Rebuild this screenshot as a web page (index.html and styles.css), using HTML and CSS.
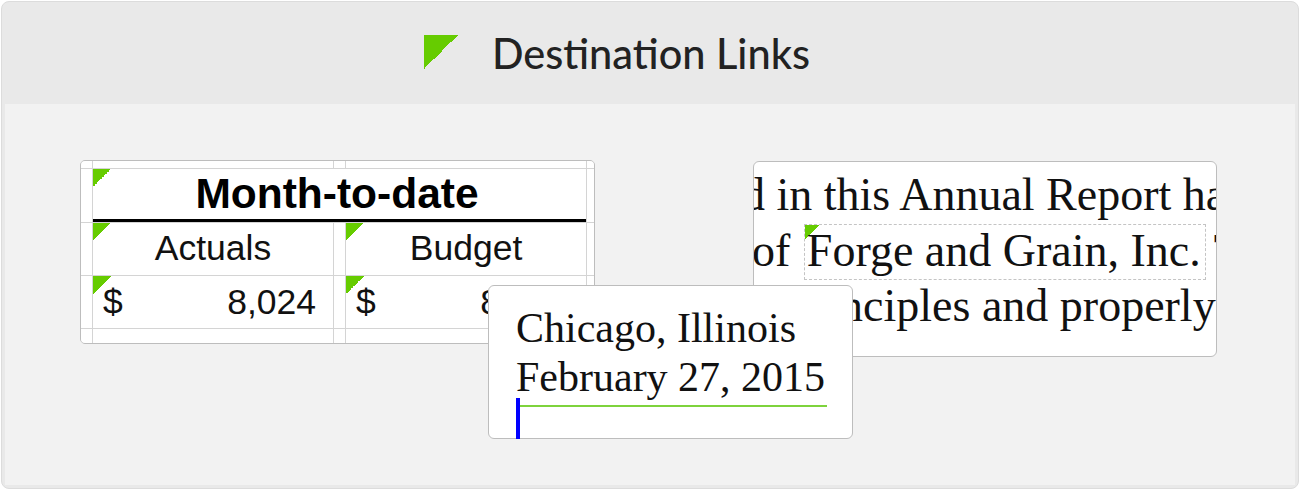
FILE: index.html
```html
<!DOCTYPE html>
<html lang="en">
  <head>
    <meta charset="UTF-8" />
    <meta name="viewport" content="width=device-width, initial-scale=1.0" />
    <title>Destination Links</title>
    <link rel="stylesheet" href="styles.css">
  </head>
  <body>
    <div class="frame">
      <header class="head">
        <h1 class="title"><span class="mark"></span>Destination Links</h1>
      </header>
      <main class="stage">
        <div class="sheet">
          <div class="grid">
            <div class="cell"></div>
            <div class="cell"></div>
            <div class="cell"></div>
            <div class="cell"></div>
            <div class="cell"></div>

            <div class="cell"></div>
            <div class="cell head-cell flag">Month-to-date</div>
            <div class="cell"></div>

            <div class="cell"></div>
            <div class="cell label flag">Actuals</div>
            <div class="cell"></div>
            <div class="cell label flag">Budget</div>
            <div class="cell"></div>

            <div class="cell"></div>
            <div class="cell money flag"><span>$</span><span>8,024</span></div>
            <div class="cell"></div>
            <div class="cell money flag"><span>$</span><span>8,024</span></div>
            <div class="cell"></div>

            <div class="cell"></div>
            <div class="cell"></div>
            <div class="cell"></div>
            <div class="cell"></div>
            <div class="cell"></div>
          </div>
        </div>

        <div class="doc">
          <div class="line l1">d in this Annual Report have</div>
          <div class="line l2">of <span class="dest">Forge and Grain, Inc.</span>The</div>
          <div class="line l3">principles and properly</div>
        </div>

        <div class="popup">
          <div class="addr">Chicago, Illinois</div>
          <div class="addr">February 27, 2015</div>
          <div class="underline"></div>
          <div class="caret"></div>
        </div>
      </main>
    </div>
  </body>
</html>
```

FILE: styles.css
```css
body {
  margin: 0;
  background: #fff;
}
.frame {
  margin: 1px;
  height: 488px;
  box-sizing: border-box;
  border: 1px solid #dcdcdc;
  border-radius: 8px;
  padding: 0 3px 3px;
  background: #e9e9e9;
  display: flex;
  flex-direction: column;
  overflow: hidden;
}
.head {
  height: 102px;
  display: flex;
  align-items: center;
  justify-content: center;
}
.title {
  margin: 0;
  padding-right: 68px;
  display: flex;
  align-items: center;
  gap: 34px;
  font-family: Lato, "Open Sans", sans-serif;
  font-weight: 500;
  font-size: 41.5px;
  color: #222;
}
.mark {
  width: 34px;
  height: 34px;
  margin: -2px 0 0 2px;
  background: linear-gradient(to bottom right, #66cc00 50%, transparent 50%);
}
.stage {
  position: relative;
  flex: 1;
  background: #f2f2f2;
  display: flex;
  align-items: flex-start;
  padding: 56px 0 0 75px;
}

/* spreadsheet snippet */
.sheet {
  border: 1px solid #bdbdbd;
  border-radius: 5px;
  overflow: hidden;
  background: #d4d4d4;
}
.grid {
  display: grid;
  grid-template-columns: 11px 240px 11px 240px 7px;
  grid-template-rows: 7px 53px 52px 52px 14px;
  gap: 1px;
  font-family: "Liberation Sans", Arial, sans-serif;
  color: #111;
}
.cell {
  background: #fff;
  box-sizing: border-box;
}
.flag {
  background: #fff linear-gradient(to bottom right, #66cc00 50%, transparent 50%) no-repeat 0 0 / 18px 18px;
}
.head-cell {
  grid-column: span 3;
  border-bottom: 3px solid #000;
  font-weight: bold;
  font-size: 42.5px;
  display: flex;
  align-items: center;
  justify-content: center;
  padding-right: 5px;
  color: #000;
}
.label {
  font-size: 35.5px;
  display: flex;
  align-items: center;
  justify-content: center;
  padding-bottom: 2px;
}
.money {
  font-size: 35.5px;
  display: flex;
  align-items: center;
  justify-content: space-between;
  padding: 0 17px 0 10px;
}

/* document snippet */
.doc {
  margin: 1px 0 0 158px;
  width: 462px;
  height: 189px;
  border: 1px solid #bdbdbd;
  border-radius: 6px;
  background: #fff;
  overflow: hidden;
  padding-top: 5px;
  box-sizing: content-box;
  font-family: "Liberation Serif", "Times New Roman", serif;
  font-size: 46px;
  line-height: 55.5px;
  color: #111;
  white-space: nowrap;
}
.l1 {
  margin-left: -12px;
}
.l2 {
  margin-left: -2px;
}
.l3 {
  margin-left: 35px;
}
.dest {
  border: 1px dashed #c4c4c4;
  padding: 0 4px 3px 2px;
  margin: 0 8px 0 2px;
  background: linear-gradient(to bottom right, #66cc00 50%, transparent 50%) no-repeat 0 0 / 14px 14px;
}

/* link target popup */
.popup {
  position: absolute;
  left: 483px;
  top: 181px;
  width: 336px;
  height: 134px;
  padding: 18px 0 0 27px;
  border: 1px solid #bdbdbd;
  border-radius: 6px;
  background: #fff;
  font-family: "Liberation Serif", "Times New Roman", serif;
  font-size: 42px;
  line-height: 49px;
  color: #111;
}
.underline {
  width: 311px;
  height: 2px;
  margin-top: 3px;
  background: #7ed33c;
}
.caret {
  position: relative;
  width: 4px;
  height: 41px;
  margin-top: -9px;
  background: #0000ff;
}
```
